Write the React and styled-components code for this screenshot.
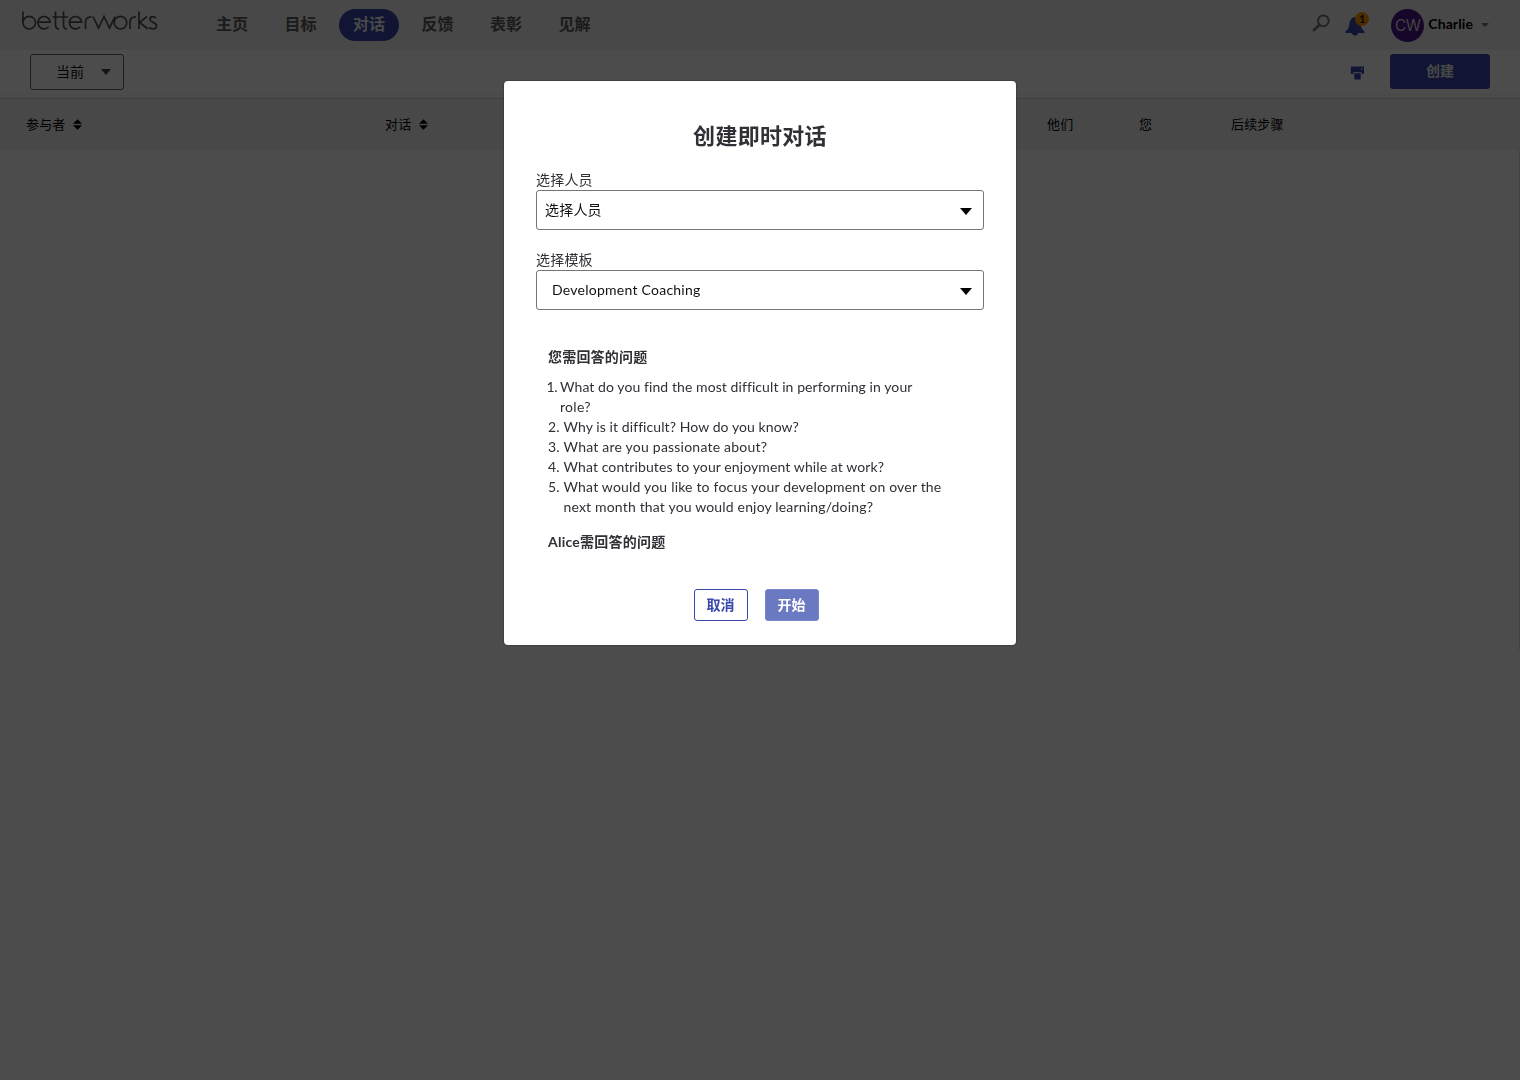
import React from "react";
import styled, { createGlobalStyle } from "styled-components";

const Global = createGlobalStyle`
  * { box-sizing: border-box; }
  html, body { margin: 0; height: 100%; overflow: hidden; background: #fff; }
  body, button { font-family: Lato, "Noto Sans CJK SC", sans-serif; }
  button { cursor: pointer; margin: 0; }
`;

const Page = styled.div`
  display: flex;
  flex-direction: column;
  height: 1080px;
  background: #fff;
`;
const TopBar = styled.header`
  display: flex;
  align-items: center;
  height: 50px;
  padding: 0 31px 1px 21px;
  background: #f0f0f0;
`;
const Logo = styled.svg`
  display: block;
  margin-bottom: 7px;
  margin-right: 44px;
  flex: none;
`;
const Nav = styled.nav`
  display: flex;
  gap: 8.5px;
  padding-top: 1px;
`;
const NavItem = styled.a`
  display: flex;
  align-items: center;
  justify-content: center;
  width: 60px;
  height: 32px;
  padding-bottom: 4px;
  border-radius: 16px;
  font-size: 16px;
  font-weight: 700;
  color: ${(p) => (p.$active ? "#f0f0f0" : "#5c5c5c")};
  background: ${(p) => (p.$active ? "#3949ab" : "transparent")};
`;
const Account = styled.div`
  display: flex;
  align-items: center;
  margin-left: auto;
`;
const Search = styled.svg`
  display: block;
  margin: 0 14px 3px 0;
`;
const Bell = styled.div`
  position: relative;
  width: 24px;
  height: 26px;
  margin-right: 22px;
`;
const Badge = styled.span`
  position: absolute;
  top: 0;
  right: 0;
  width: 14px;
  height: 14px;
  border-radius: 7px;
  background: #ff9800;
  color: #111;
  font-size: 11px;
  font-weight: 700;
  line-height: 14px;
  text-align: center;
`;
const Avatar = styled.div`
  width: 33px;
  height: 33px;
  margin: 1px 4px 0 0;
  border-radius: 50%;
  background: #4a148c;
  color: #ddd;
  font-family: Inter, "Liberation Sans", sans-serif;
  font-size: 15.5px;
  line-height: 34px;
  letter-spacing: -0.5px;
  text-align: center;
`;
const UserName = styled.span`
  font-size: 14px;
  font-weight: 700;
  letter-spacing: 0.1px;
  line-height: 18px;
  padding-bottom: 1px;
  color: #000;
`;
const Caret = styled.i`
  flex: none;
  border: solid transparent;
  border-width: ${(p) => p.$h}px ${(p) => p.$w / 2}px 0;
  border-top-color: ${(p) => p.$color};
  margin-left: ${(p) => p.$gap || 0}px;
  margin-top: ${(p) => p.$drop || 0}px;
`;

const Toolbar = styled.div`
  display: flex;
  align-items: center;
  height: 49px;
  padding: 0 30px 5px;
  border-bottom: 1px solid #d4d4d4;
  box-shadow: inset 0 -4px 0 #f7f7f7;
`;
const Filter = styled.button`
  display: flex;
  align-items: center;
  width: 94px;
  height: 36px;
  padding: 0 0 0 25px;
  border: 1px solid #666;
  border-radius: 3px;
  background: #fff;
  color: #111;
  font-size: 14px;
`;
const FilterText = styled.span`
  padding-bottom: 2px;
`;
const Printer = styled.svg`
  display: block;
  margin: 3px 26px 0 auto;
`;
const CreateButton = styled.button`
  width: 100px;
  height: 35px;
  padding: 0 0 3px;
  border: 0;
  border-radius: 3px;
  background: #3949ab;
  color: #f0f0f0;
  font-size: 14px;
  font-weight: 700;
`;
const TableHead = styled.div`
  display: grid;
  grid-template-columns: 359px 662px 92px 92px 1fr;
  align-items: center;
  height: 51px;
  padding: 0 0 1px 26px;
  background: #f2f2f2;
  color: #000;
  font-size: 13px;
  line-height: 20px;
  letter-spacing: 0.15px;
`;
const HeadCell = styled.div`
  display: flex;
  align-items: center;
  gap: 7.5px;
`;
const PageBody = styled.main`
  height: 500px;
  border-right: 1px solid #dedede;
`;
const SortSvg = styled.svg`
  margin-top: 1px;
`;

const Overlay = styled.div`
  position: fixed;
  inset: 0;
  display: flex;
  justify-content: center;
  align-items: flex-start;
  padding-top: 81px;
  background: rgba(0, 0, 0, 0.7);
`;
const Dialog = styled.section`
  display: flex;
  flex-direction: column;
  width: 512px;
  height: 564px;
  padding: 38px 32px 24px;
  border-radius: 4px;
  background: #fff;
  color: #303036;
  box-shadow: 0 0 2px rgba(0, 0, 0, 0.6);
`;
const Title = styled.h2`
  margin: 0 0 20px;
  font-size: 22px;
  line-height: 33px;
  font-weight: 700;
  letter-spacing: 0.3px;
  text-align: center;
`;
const Field = styled.div`
  display: flex;
  flex-direction: column;
  margin-bottom: 22px;
`;
const Label = styled.label`
  height: 18px;
  font-size: 14px;
  line-height: 16px;
  letter-spacing: 0.2px;
`;
const Select = styled.div`
  display: flex;
  align-items: center;
  justify-content: space-between;
  height: 40px;
  padding: 0 11px 1px ${(p) => p.$inset}px;
  border: 1px solid #757575;
  border-radius: 3px;
  color: #111;
  font-size: 14px;
  line-height: 17px;
  letter-spacing: ${(p) => p.$track}px;
`;
const Questions = styled.div`
  padding: 15px 12px 0;
`;
const Heading = styled.h3`
  margin: 0;
  font-size: 14px;
  line-height: 20px;
  font-weight: 700;
  letter-spacing: ${(p) => p.$track}px;
`;
const List = styled.ol`
  list-style: none;
  margin: 10px 0 15px;
  padding: 0;
`;
const Question = styled.li`
  display: flex;
  font-size: 14px;
  line-height: 20px;
`;
const Num = styled.span`
  flex: none;
  width: ${(p) => p.$w}px;
  margin-left: ${(p) => p.$shift || 0}px;
  letter-spacing: ${(p) => (p.$shift ? -0.5 : 0)}px;
`;
const Line = styled.div`
  white-space: nowrap;
  letter-spacing: ${(p) => p.$track}px;
`;
const Actions = styled.div`
  display: flex;
  justify-content: center;
  gap: 17px;
  margin-top: auto;
  padding-right: 8px;
`;
const Action = styled.button`
  width: 54px;
  height: 32px;
  padding: 0 0 3px;
  border: 1px solid ${(p) => (p.$primary ? "#7b86cb" : "#3949ab")};
  border-radius: 3px;
  background: ${(p) => (p.$primary ? "#6b78c2" : "#fff")};
  color: ${(p) => (p.$primary ? "#fff" : "#3949ab")};
  font-size: 14px;
  font-weight: 700;
`;

const navItems = ["主页", "目标", "对话", "反馈", "表彰", "见解"];
const questions = [
  { w: 13.5, shift: -1.5, lines: [["What do you find the most difficult in performing in your", 0.08], ["role?", 0.3]] },
  { w: 15.5, lines: [["Why is it difficult? How do you know?", 0.08]] },
  { w: 15.5, lines: [["What are you passionate about?", 0.22]] },
  { w: 15.5, lines: [["What contributes to your enjoyment while at work?", 0.1]] },
  {
    w: 15.5,
    lines: [
      ["What would you like to focus your development on over the", 0.19],
      ["next month that you would enjoy learning/doing?", 0.17],
    ],
  },
];

const SortIcon = () => (
  <SortSvg width="9" height="11" viewBox="0 0 9 11">
    <path d="M4.5 0.2 9 4.8H0ZM4.5 10.8 9 6.2H0Z" fill="#000" />
  </SortSvg>
);

const Wordmark = () => (
  <Logo width="137" height="20" viewBox="0 0 137 20" fill="none" stroke="#505050" strokeWidth="1.7" aria-label="betterworks">
    <path d="M1.9 0.5V12" />
    <circle cx="8.2" cy="11.7" r="6.3" />
    <path d="M17 11.2H29.2A6.2 6.2 0 1 0 27.5 16" />
    <path d="M34.5 0.5V13.5Q34.5 18 38 18M31.5 6H47M42.5 0.5V13.5Q42.5 18 46 18" />
    <path d="M48.5 11.2H60.7A6.2 6.2 0 1 0 59 16" />
    <path d="M64.5 18V11Q64.5 5.8 70.5 5.8" />
    <path d="M72 5.5 77.5 17 83 5.5 88.5 17 94 5.5" />
    <circle cx="99.5" cy="11.7" r="6.3" />
    <path d="M109 18V11Q109 5.8 115 5.8" />
    <path d="M118 0.5V18M126 5.5 118.500 11.500 127 18" />
    <path d="M135 7.2Q133.5 5.7 131.8 5.7 129 5.7 129 8.3C129 11.8 135.5 11 135.5 14.8Q135.5 18 132 18 130 18 128.2 16.4" />
  </Logo>
);

export default function App() {
  return (
    <>
      <Global />
      <Page>
        <TopBar>
          <Wordmark />
          <Nav>
            {navItems.map((n) => (
              <NavItem key={n} $active={n === "对话"}>{n}</NavItem>
            ))}
          </Nav>
          <Account>
            <Search width="19" height="18" viewBox="0 0 19 18" fill="none" stroke="#777">
              <circle cx="11.3" cy="6.8" r="5.4" strokeWidth="2" />
              <path d="M7.2 11 2 16" strokeWidth="2.8" strokeLinecap="round" />
            </Search>
            <Bell>
              <svg width="20" height="26" viewBox="0 0 20 26" fill="#3949ab">
                <path d="M10 5C6.5 5.5 5 8 4.500 11.500 4 16 3 17.500 0.500 19.500V21H19.500V19.500C17 17.500 16 16 15.500 11.500 15 8 13.500 5.500 10 5Z" />
                <path d="M7 20.500a3 3 0 0 0 6 0Z" />
              </svg>
              <Badge>1</Badge>
            </Bell>
            <Avatar>CW</Avatar>
            <UserName>Charlie</UserName>
            <Caret $w={8} $h={4} $gap={8} $color="#777" />
          </Account>
        </TopBar>
        <Toolbar>
          <Filter><FilterText>当前</FilterText><Caret $w={10} $h={6} $gap={17} $drop={1} $color="#444" /></Filter>
          <Printer width="14" height="14" viewBox="0 0 14 14" fill="#3949ab">
            <path fillRule="evenodd" d="M1 0.500H13.500Q14 0.500 14 1V8H11.700V6.300H3.300V8H0.800V1Q0.800 0.500 1 0.500ZM11 2.200V3.400H12.400V2.200Z" />
            <path d="M4.300 7.300H10.700V13.500H4.300Z" />
          </Printer>
          <CreateButton>创建</CreateButton>
        </Toolbar>
        <TableHead>
          <HeadCell>参与者<SortIcon /></HeadCell>
          <HeadCell>对话<SortIcon /></HeadCell>
          <HeadCell>他们</HeadCell>
          <HeadCell>您</HeadCell>
          <HeadCell>后续步骤</HeadCell>
        </TableHead>
        <PageBody />
      </Page>
      <Overlay>
        <Dialog>
          <Title>创建即时对话</Title>
          <Field>
            <Label>选择人员</Label>
            <Select $inset={8} $track={0.2}>选择人员<Caret $w={13} $h={7} $drop={3} $color="#000" /></Select>
          </Field>
          <Field>
            <Label>选择模板</Label>
            <Select $inset={15} $track={0.25}>Development Coaching<Caret $w={13} $h={7} $drop={3} $color="#000" /></Select>
          </Field>
          <Questions>
            <Heading $track={0.2}>您需回答的问题</Heading>
            <List>
              {questions.map((q, i) => (
                <Question key={i}>
                  <Num $w={q.w} $shift={q.shift}>{i + 1}.</Num>
                  <div>
                    {q.lines.map(([text, track]) => (
                      <Line key={text} $track={track}>{text}</Line>
                    ))}
                  </div>
                </Question>
              ))}
            </List>
            <Heading $track={0.25}>Alice需回答的问题</Heading>
          </Questions>
          <Actions>
            <Action>取消</Action>
            <Action $primary>开始</Action>
          </Actions>
        </Dialog>
      </Overlay>
    </>
  );
}
